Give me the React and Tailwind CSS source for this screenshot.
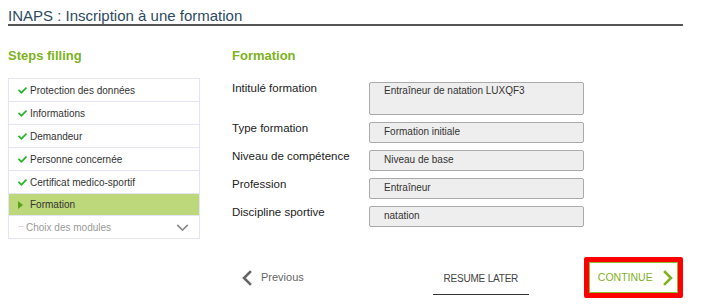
import { FaCheck } from "react-icons/fa";

const steps = [
    { label: "Protection des données", done: true },
    { label: "Informations", done: true },
    { label: "Demandeur", done: true },
    { label: "Personne concernée", done: true },
    { label: "Certificat medico-sportif", done: true },
];

const fields = [
    { label: "Intitulé formation", value: "Entraîneur de natation LUXQF3", tall: true },
    { label: "Type formation", value: "Formation initiale" },
    { label: "Niveau de compétence", value: "Niveau de base" },
    { label: "Profession", value: "Entraîneur" },
    { label: "Discipline sportive", value: "natation" },
];

const Chevron = ({ dir = "right", className = "" }) => (
    <svg viewBox="0 0 10 16" className={className} fill="none" stroke="currentColor" strokeWidth="2.6" strokeLinecap="square">
        {dir === "right" ? <path d="M2 2 L8 8 L2 14" /> : <path d="M8 2 L2 8 L8 14" />}
    </svg>
);

const App = () => {
    return (
        <div className="w-[706px] h-[304px] bg-white font-['Liberation_Sans',sans-serif] overflow-hidden">
            <div className="ml-[8px] w-[675px]">
                {/* title */}
                <div className="pt-[9px] pb-[1px] border-b-2 border-[#555555] text-[15px] leading-[14px] text-[#2c4a62]">
                    INAPS : Inscription à une formation
                </div>

                <div className="flex mt-[22px]">
                    {/* steps */}
                    <div className="w-[192px]">
                        <div className="text-[13px] leading-[16px] font-bold text-[#7db21c] h-[30px]">Steps filling</div>
                        <ul className="border border-[#e4e4f4] text-[10px] text-[#333333]">
                            {steps.map((s) => (
                                <li key={s.label} className="h-[23px] flex items-center pl-[9px] border-b border-[#e4e4f4]">
                                    <FaCheck className="w-[9px] h-[9px] text-[#2bb52b] mr-[3px]" />
                                    {s.label}
                                </li>
                            ))}
                            <li className="h-[22px] flex items-center pl-[9px] bg-[#bdd77b] border-b border-[#e4e4f4]">
                                <span className="w-0 h-0 border-y-[4px] border-y-transparent border-l-[5px] border-l-[#59a31a] mr-[7px]" />
                                Formation
                            </li>
                            <li className="h-[22px] flex items-center pl-[9px] pr-[10px] text-[#9a9a9a]">
                                <span className="mr-[3px] text-[8px] tracking-[-1px]">···</span>
                                Choix des modules
                                <svg viewBox="0 0 14 8" className="ml-auto w-[13px] h-[7px] text-[#8a8a8a]" fill="none" stroke="currentColor" strokeWidth="1.8">
                                    <path d="M1 1 L7 7 L13 1" />
                                </svg>
                            </li>
                        </ul>
                    </div>

                    {/* form */}
                    <div className="ml-[32px] flex-1">
                        <div className="text-[13px] leading-[16px] font-bold text-[#7db21c] h-[34px]">Formation</div>
                        <div className="flex flex-col gap-[7px]">
                            {fields.map((f) => (
                                <div key={f.label} className="flex items-start">
                                    <div className="w-[137px] text-[11.5px] leading-[12px] text-[#222222]">{f.label}</div>
                                    <div
                                        className={`w-[215px] ${f.tall ? "h-[33px] pt-[2px]" : "h-[21px] pt-[3px]"} bg-[#eeeeee] border border-[#aaaaaa] rounded-[2px] pl-[14px] text-[10px] leading-[12px] text-[#333333]`}
                                    >
                                        {f.value}
                                    </div>
                                </div>
                            ))}
                        </div>
                    </div>
                </div>

                {/* actions */}
                <div className="flex items-center mt-[18px] h-[41px]">
                    <div className="ml-[234px] flex items-center text-[#666666] text-[11px]">
                        <Chevron dir="left" className="w-[10px] h-[16px] text-[#666666]" />
                        <span className="ml-[9px]">Previous</span>
                    </div>
                    <div className="ml-[129px] w-[96px] h-[31px] mt-[3px] border-b border-[#333333] flex items-center justify-center text-[10px] tracking-[-0.2px] text-[#444444]">
                        RESUME LATER
                    </div>
                    <div className="ml-[55px] border-[5px] border-[#ff0000] rounded-[2px]">
                        <div className="w-[89px] h-[31px] border border-[#8cbf2e] flex items-center pl-[8px] text-[10.5px] text-[#7fb21f]">
                            CONTINUE
                            <Chevron dir="right" className="ml-[10px] w-[10px] h-[16px] text-[#7fb21f]" />
                        </div>
                    </div>
                </div>
            </div>
        </div>
    );
};

export default App;
